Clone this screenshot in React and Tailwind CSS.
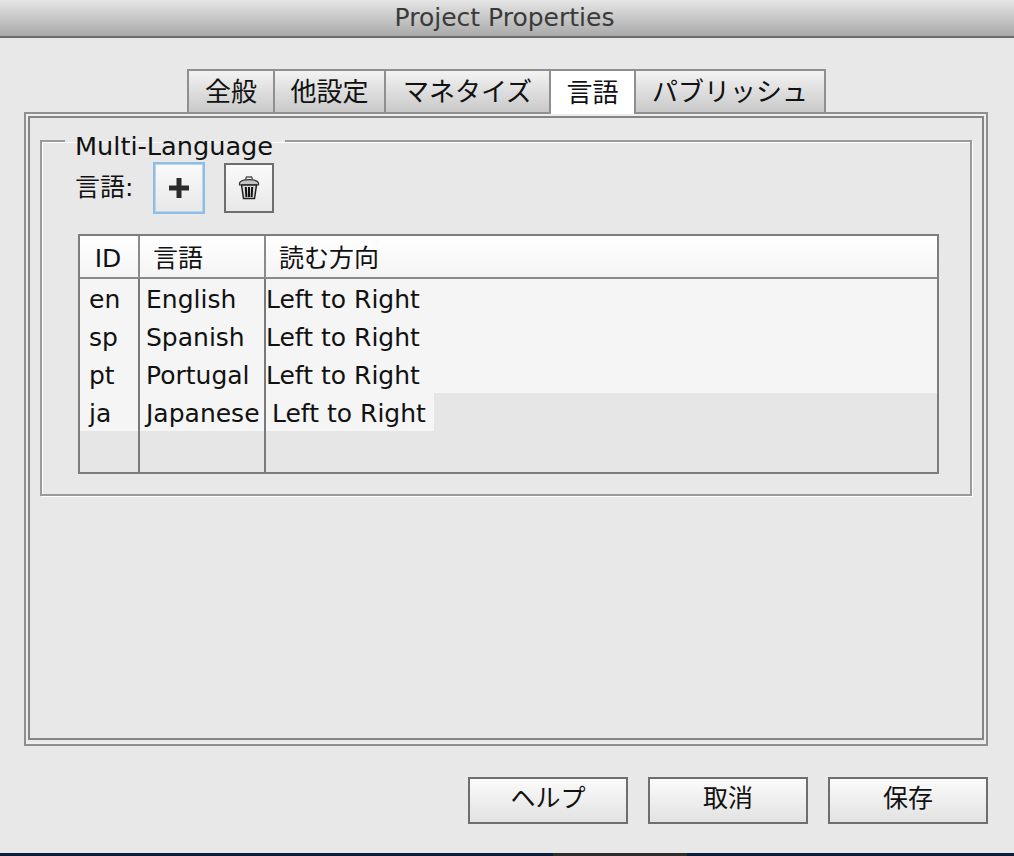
import React from 'react';

const font = "font-['DejaVu_Sans','Noto_Sans_CJK_JP',sans-serif]";

const tabs = [
    { label: '全般', width: 'w-[88px]' },
    { label: '他設定', width: 'w-[113px]' },
    { label: 'マネタイズ', width: 'w-[167px]' },
    { label: '言語', width: 'w-[87px]', active: true },
    { label: 'パブリッシュ', width: 'w-[192px]' },
];

const rows = [
    { id: 'en', name: 'English', dir: 'Left to Right' },
    { id: 'sp', name: 'Spanish', dir: 'Left to Right' },
    { id: 'pt', name: 'Portugal', dir: 'Left to Right' },
    { id: 'ja', name: 'Japanese', dir: 'Left to Right', last: true },
];

const PlusIcon = () => (
    <svg width="20" height="20" viewBox="0 0 20 20" fill="#2b2b2b">
        <path d="M7.5 0h5v7.5H20v5h-7.5V20h-5v-7.5H0v-5h7.5z" />
    </svg>
);

const TrashIcon = () => (
    <svg width="22" height="24" viewBox="0 0 22 24">
        <path d="M1.5 7 C3 2.5 19 2.5 20.5 7 L20.5 9 L1.5 9 Z" fill="#c4c4c4" stroke="#333" strokeWidth="1.2" />
        <path d="M7.5 3 L8.5 1 L13.5 1 L14.5 3" fill="none" stroke="#555" strokeWidth="1.5" />
        <path d="M3.5 9 L5.5 22.5 L16.5 22.5 L18.5 9 Z" fill="#d8d8d8" stroke="#222" strokeWidth="1.5" />
        <path d="M7.8 11 L8.4 21 M11 11 L11 21 M14.2 11 L13.6 21" stroke="#111" strokeWidth="2" />
    </svg>
);

const DialogButton = ({ children }) => (
    <button className="w-[160px] h-[47px] border-2 border-[#6e6e6e] bg-gradient-to-b from-[#fbfbfb] to-[#e2e2e2] text-[#111] text-[25px] leading-none flex items-center justify-center pb-[4px]">
        {children}
    </button>
);

const App = () => {
    return (
        <div className={`${font} w-[1014px] h-[856px] overflow-hidden flex flex-col bg-[#e8e8e8] text-[#111]`}>
            {/* title bar */}
            <div className="h-[38px] shrink-0 border-b-2 border-[#6b6b6b] bg-gradient-to-b from-[#e6e6e6] to-[#a9a9a9] flex items-center justify-center text-[25px] text-[#3a3a3a] pr-[5px]">
                Project Properties
            </div>

            <div className="flex-1 flex flex-col pl-[24px] pr-[26px]">
                {/* tabs */}
                <div className="relative z-10 flex items-start h-[43px] mt-[31px] ml-[163px]">
                    {tabs.map((tab) => (
                        <div
                            key={tab.label}
                            className={`${tab.width} border-t-2 border-x-2 -mr-[2px] pt-[2px] border-[#8f8f8f] flex items-center justify-center text-[26px] ${
                                tab.active
                                    ? 'h-[45px] bg-white'
                                    : 'h-[43px] bg-gradient-to-b from-[#f3f3f3] to-[#c9c9c9]'
                            }`}
                        >
                            {tab.label}
                        </div>
                    ))}
                </div>

                {/* double border panel */}
                <div className="h-[634px] border-2 border-[#8f8f8f] pt-[2px] px-[2px] pb-[4px] shadow-[inset_0_0_0_2px_#eeeeee]">
                    <div className="h-full border-2 border-[#858585] px-[10px] pt-[9px]">
                        <fieldset className="h-[369px] border-2 border-[#9a9a9a] shadow-[inset_1px_1px_0_#fff,1px_1px_0_#fff] pl-[36px] pr-[31px]">
                            <legend className="relative top-[5px] -ml-[13px] pl-[10px] pr-[12px] text-[25.6px] leading-[28px] text-[#111]">
                                Multi-Language
                            </legend>

                            {/* add / remove */}
                            <div className="flex items-center h-[50px] mt-[8px] -ml-[3px]">
                                <span className="text-[25px] w-[78px]">言語:</span>
                                <button className="w-[52px] h-[52px] shrink-0 border-2 border-[#8fbde4] shadow-[inset_0_0_0_1px_#b9d5ee] bg-gradient-to-b from-[#fafafa] to-[#e8e8e8] flex items-center justify-center">
                                    <PlusIcon />
                                </button>
                                <button className="w-[50px] h-[50px] ml-[19px] border-2 border-[#6e6e6e] bg-gradient-to-b from-[#fafafa] to-[#e8e8e8] flex items-center justify-center">
                                    <TrashIcon />
                                </button>
                            </div>

                            {/* table */}
                            <div className="mt-[21px] h-[240px] border-2 border-[#7d7d7d] flex flex-col bg-[#e6e6e6] text-[25px]">
                                <div className="h-[43px] shrink-0 flex border-b-2 border-[#8a8a8a] bg-gradient-to-b from-white to-[#f4f4f4]">
                                    <div className="w-[60px] border-r-2 border-[#8a8a8a] flex items-center justify-center pt-[5px] pr-[2px]">ID</div>
                                    <div className="w-[126px] border-r-2 border-[#8a8a8a] flex items-center pl-[13px] pt-[5px]">言語</div>
                                    <div className="flex-1 flex items-center pl-[13px] pt-[5px]">読む方向</div>
                                </div>
                                <div className="flex-1 flex flex-col">
                                    {rows.map((row) => (
                                        <div key={row.id} className="h-[38px] flex">
                                            <div className="w-[60px] border-r-2 border-[#7a7a7a] bg-[#f5f5f5] pl-[9px] pt-[2px] leading-[38px]">{row.id}</div>
                                            <div className="w-[126px] border-r-2 border-[#7a7a7a] bg-[#f5f5f5] pl-[6px] pt-[2px] leading-[38px] whitespace-nowrap">{row.name}</div>
                                            <div className="flex-1">
                                                <div className={`h-full bg-[#f5f5f5] pt-[2px] leading-[38px] whitespace-nowrap ${row.last ? 'w-[168px] pl-[6px]' : 'w-full'}`}>
                                                    {row.dir}
                                                </div>
                                            </div>
                                        </div>
                                    ))}
                                    <div className="flex-1 flex">
                                        <div className="w-[60px] border-r-2 border-[#7a7a7a]" />
                                        <div className="w-[126px] border-r-2 border-[#7a7a7a]" />
                                    </div>
                                </div>
                            </div>
                        </fieldset>
                    </div>
                </div>

                {/* dialog buttons */}
                <div className="flex justify-end gap-[20px] mt-[31px]">
                    <DialogButton>ヘルプ</DialogButton>
                    <DialogButton>取消</DialogButton>
                    <DialogButton>保存</DialogButton>
                </div>
            </div>

            <div className="h-[3px] shrink-0 bg-[#0c1c3f]">
                <div className="ml-[553px] w-[134px] h-full bg-[#2e2c2c]" />
            </div>
        </div>
    );
};

export default App;
